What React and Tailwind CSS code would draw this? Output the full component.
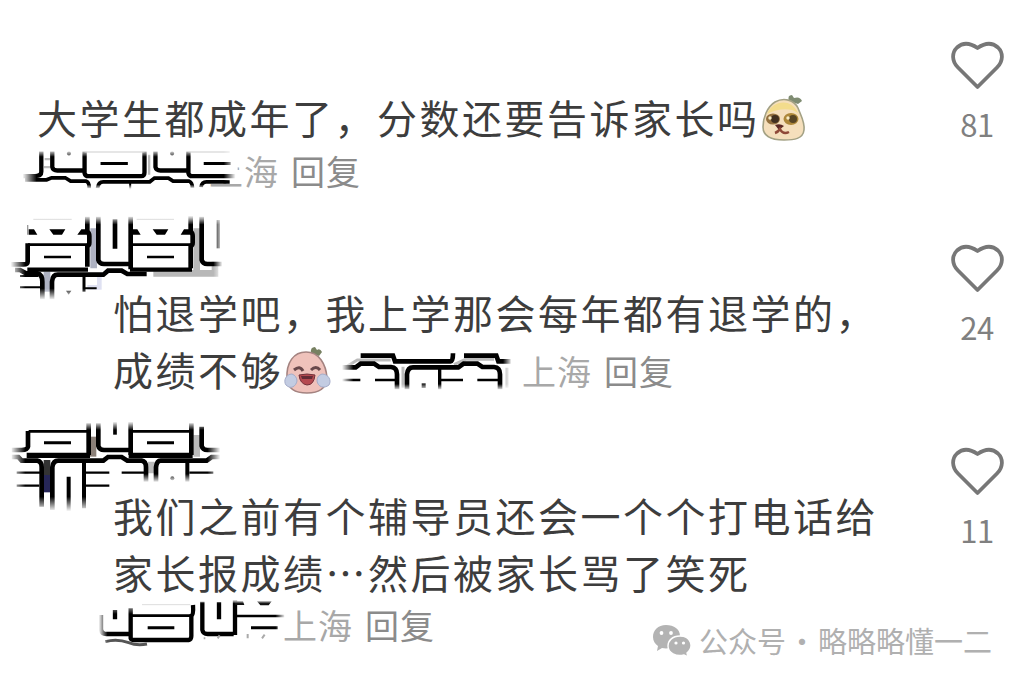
const FONT = "font-['Noto_Sans_CJK_SC','Noto_Sans',sans-serif]";

function Defs() {
    return (
        <svg width="0" height="0" className="absolute">
            <defs>
                <linearGradient id="fadeLeft">
                    <stop offset="0.15" stopColor="#fff" />
                    <stop offset="1" stopColor="#fff" stopOpacity="0" />
                </linearGradient>
                <linearGradient id="fadeRight">
                    <stop offset="0" stopColor="#fff" stopOpacity="0" />
                    <stop offset="0.85" stopColor="#fff" />
                </linearGradient>
                <linearGradient id="fadeTop" x2="0" y2="1">
                    <stop offset="0.15" stopColor="#fff" />
                    <stop offset="1" stopColor="#fff" stopOpacity="0" />
                </linearGradient>
                <linearGradient id="fadeBottom" x2="0" y2="1">
                    <stop offset="0" stopColor="#fff" stopOpacity="0" />
                    <stop offset="0.85" stopColor="#fff" />
                </linearGradient>
            </defs>
        </svg>
    );
}

function Heart() {
    return (
        <svg viewBox="0 0 54 50" className="h-[50px] w-[54px]" fill="none" stroke="#777" strokeWidth="3.8" strokeLinejoin="round">
            <path d="M27.500 47 L8 27.500 C1.500 21 1.800 12.500 7 7.500 C12.500 2.500 20 2.800 27.500 8 C35 2.800 42.500 2.500 48 7.500 C53.200 12.500 53.500 21 47 27.500 Z" />
        </svg>
    );
}

function Like({ count }) {
    return (
        <div className="flex w-[94px] shrink-0 flex-col items-center pt-10">
            <Heart />
            <span className="mt-4 text-[31px] leading-9 tracking-[-0.5px] text-[#808080]">{count}</span>
        </div>
    );
}

function Meta({ className = "" }) {
    return (
        <span className={`text-[34px] leading-10 tracking-[1px] whitespace-pre ${className}`}>
            <span className="text-[#a8a8a8]">上海</span>
            <span className="ml-3 text-[#8b8b8b]">回复</span>
        </span>
    );
}

function DogeEmoji() {
    return (
        <svg viewBox="0 0 48 50" className="h-[50px] w-12 shrink-0">
            <path d="M29 8 Q27 2 32 2 L34 5 Q40 3 42 8 L38 11 Z" fill="#7f8c72" />
            <path d="M3 34 C3 25 7 14 15 9 C24 4 34 7 38 15 C41 23 45 29 44 37 C43 46 34 47 24 47 C11 47 3 43 3 34 Z" fill="#f5dfbc" stroke="#a3a184" strokeWidth="1.6" />
            <path d="M7 21 C12 8 31 4 38 20 C30 14 17 16 7 21 Z" fill="#f3dc8c" />
            <ellipse cx="13" cy="26" rx="7" ry="5.500" fill="#94713f" />
            <ellipse cx="31" cy="26" rx="7.500" ry="6" fill="#ad8739" />
            <circle cx="15" cy="26" r="4" fill="#41301f" />
            <circle cx="33" cy="26" r="4" fill="#584525" />
            <circle cx="10" cy="25" r="1.700" fill="#f8ecc5" />
            <circle cx="28" cy="25" r="1.700" fill="#f8ecc5" />
            <path d="M15 32 Q20 30 24 33 L19 37 Z" fill="#5b2923" />
            <path d="M15 40 Q18 39 20 36 Q23 42 29 39" fill="none" stroke="#8f4938" strokeWidth="2.500" />
        </svg>
    );
}

function CryEmoji() {
    return (
        <svg viewBox="0 0 48 50" className="h-[50px] w-12 shrink-0">
            <path d="M28 8 Q27 2 32 2 L34 5 Q37 3 39 7 L36 11 Z" fill="#778061" />
            <path d="M4 34 C3 17 11 7 23 7 C36 7 43 19 44 33 C43 45 35 48 24 48 C13 48 5 45 4 34 Z" fill="#efc2bb" stroke="#a48380" strokeWidth="1.600" />
            <path d="M11 25 Q17 20 20 26 M28 25 Q33 20 37 25" fill="none" stroke="#68474a" strokeWidth="3" />
            <path d="M16 30 Q24 28 32 30 Q31 40 24 40 Q17 39 16 30 Z" fill="#b64a50" stroke="#73313a" />
            <path d="M18 31 H30 L29 34 H19 Z" fill="#642b35" />
            <path d="M9 29 C3 29 0 36 3 40 C8 45 13 41 14 36 C14 33 12 30 9 29 Z" fill="#c3cce2" stroke="#a4acc9" />
            <path d="M39 29 C45 29 49 35 46 40 C41 44 35 42 34 36 C34 32 36 30 39 29 Z" fill="#c3cce2" stroke="#a4acc9" />
        </svg>
    );
}

// Scribbles that hide the nickname / date of each comment
function ScribbleA() {
    return (
        <svg viewBox="60 205 670 125" className="relative mr-[-34px] h-[42px] w-[223px] shrink-0" fill="none" stroke="#000" strokeWidth="13">
            <rect x="60" y="205" width="650" height="97" fill="#fff" stroke="none" />
            <path d="M134 238 H150 M132 262 H150 M448 225 V285" stroke="#bbb" strokeWidth="7" />
            <path d="M124 215 V276 Q124 289 105 289 H65 M157 215 V262 Q159 272 172 272 H254" />
            <path d="M254 215 V280 Q256 289 266 289 H424 Q434 289 434 278 V215" />
            <path d="M467 215 V262 Q469 272 482 272 H562 M566 215 V280 Q568 289 578 289 H710" />
            <path d="M254 216 H434 M566 216 H690" stroke="#888" strokeWidth="4" />
            <path d="M302 251 H384 M612 251 H693" strokeWidth="9" />
            <path d="M75 300 H140 L155 294 H196 L212 304 H258 Q268 306 268 325 M293 325 Q295 306 310 306 H450 L464 295 H506 L520 304 H568 Q578 308 578 324 M604 322 Q606 306 620 306 H690" strokeWidth="11" />
            <path d="M391 306 V328" strokeWidth="6" />
            <circle cx="207" cy="221" r="6" fill="#333" stroke="none" />
            <circle cx="517" cy="221" r="6" fill="#333" stroke="none" />
            <rect x="60" y="205" width="50" height="125" fill="url(#fadeLeft)" stroke="none" />
            <rect x="672" y="205" width="42" height="97" fill="url(#fadeRight)" stroke="none" />
            <rect x="60" y="205" width="650" height="26" fill="url(#fadeTop)" stroke="none" />
            <rect x="60" y="314" width="560" height="16" fill="url(#fadeBottom)" stroke="none" />
        </svg>
    );
}

function ScribbleB() {
    return (
        <svg viewBox="24 42 648 264" className="h-[88px] w-[216px] shrink-0" fill="none" stroke="#000" strokeWidth="14">
            <path d="M281 85 V205 M141 215 V275" stroke="#aeb2c2" strokeWidth="20" />
            <path d="M590 85 V215 M460 220 H655 M645 145 V220" stroke="#b8b8b8" strokeWidth="20" />
            <path d="M605 60 H660 V185 H620 Z" fill="#fff" stroke="none" />
            <path d="M262 262 H298 V230" stroke="#dfe1f2" strokeWidth="14" />
            <path d="M83 130 V185 Q83 193 70 193 H30 M262 50 V94 Q268 98 268 108 V128 Q268 136 262 138 V200" />
            <path d="M83 75 V104" stroke="#999" strokeWidth="4" />
            <path d="M295 50 V180 Q298 192 312 192 H388 M392 50 V208 M572 45 V94 Q578 98 578 108 V128 Q578 136 572 138 V205" />
            <path d="M605 50 V180 Q608 192 622 192 H670 M345 58 V146" />
            <path d="M655 60 V145" strokeWidth="10" />
            <path d="M84 134 H264 M394 134 H574" strokeWidth="8" />
            <path d="M132 171 H213 M441 171 H522" strokeWidth="8" />
            <path d="M82 209 H264 M390 209 H576" strokeWidth="13" />
            <path d="M100 58 H215 M410 58 H522" stroke="#bbb" strokeWidth="4" />
            <path d="M86 88 H102 L112 104 H86 Z M148 88 H196 L186 104 H160 Z M244 88 H262 V104 H232 Z M394 88 H412 L422 104 H394 Z M458 88 H505 L495 104 H470 Z M552 88 H574 V104 H542 Z" fill="#000" stroke="none" />
            <path d="M45 210 H60 L78 220 H112 Q127 224 127 245 V298 M156 298 V245 Q158 224 173 224 H310 L324 212 H365 L382 222 H440" />
            <path d="M252 225 V275" strokeWidth="9" />
            <path d="M60 228 H115 M60 262 H122 M252 265 H290" strokeWidth="6" />
            <path d="M198 272 H214 L206 284 Z" fill="#333" stroke="none" />
            <rect x="24" y="42" width="52" height="264" fill="url(#fadeLeft)" stroke="none" />
            <rect x="640" y="42" width="32" height="264" fill="url(#fadeRight)" stroke="none" />
            <rect x="24" y="42" width="648" height="32" fill="url(#fadeTop)" stroke="none" />
            <rect x="24" y="265" width="320" height="41" fill="url(#fadeBottom)" stroke="none" />
        </svg>
    );
}

function ScribbleC() {
    return (
        <svg viewBox="213 32 519 129" className="h-[43px] w-[173px] shrink-0" fill="none" stroke="#000" strokeWidth="14">
            <path d="M235 80 L265 62 H365 M555 76 L590 60 H675 M402 82 V145 M714 85 V145" stroke="#bbb" strokeWidth="9" />
            <path d="M275 49 H372 L378 66 H545 Q552 66 552 42 M585 49 H682 L688 66 H725" />
            <path d="M215 84 H260 L275 73 H315 L330 83 H366 Q384 84 384 105 V150 M414 150 V105 Q416 84 432 84 H568 L584 73 H625 L640 83 H675 Q693 84 693 105 V150" />
            <path d="M512 80 V150" strokeWidth="10" />
            <path d="M215 122 H274 M318 122 H382 M515 122 H582 M625 122 H690" strokeWidth="7" />
            <rect x="458" y="132" width="12" height="14" fill="#222" stroke="none" />
            <rect x="213" y="32" width="40" height="129" fill="url(#fadeLeft)" stroke="none" />
            <rect x="702" y="32" width="32" height="129" fill="url(#fadeRight)" stroke="none" />
            <rect x="213" y="134" width="519" height="22" fill="url(#fadeBottom)" stroke="none" />
        </svg>
    );
}

function ScribbleD() {
    return (
        <svg viewBox="24 30 648 282" className="h-[94px] w-[216px] shrink-0" fill="none" stroke="#000" strokeWidth="14">
            <path d="M279 80 V140" stroke="#8b8078" strokeWidth="20" />
            <path d="M590 75 V140 M454 155 V190" stroke="#bbb" strokeWidth="20" />
            <path d="M141 150 V195" stroke="#333" strokeWidth="20" />
            <path d="M141 195 V247" stroke="#262657" strokeWidth="20" />
            <path d="M84 63 V110 Q82 120 65 120 H35 M266 40 V135 M295 40 V108 Q298 120 312 120 H388 M392 35 V135 M574 40 V135 M605 50 V108 Q608 120 622 120 H665" />
            <path d="M345 35 V74" strokeWidth="11" />
            <path d="M86 64 H264 M394 64 H574" strokeWidth="8" />
            <path d="M132 98 H213 M441 98 H522" strokeWidth="9" />
            <path d="M80 136 H270 M386 136 H578" strokeWidth="16" />
            <path d="M35 141 H55 L65 152 H112 Q125 154 125 172 V290 M157 300 V172 Q159 152 175 152 H310 L324 141 H365 L382 152 H425 Q438 154 438 172 V215 M468 215 V172 Q470 152 482 152 H620 L635 141 H660" />
            <path d="M252 150 V295 M562 152 V215 M206 200 V305" strokeWidth="12" />
            <path d="M50 188 H122 M50 227 H118 M256 188 H328 M256 227 H328 M365 188 H433 M568 188 H640" strokeWidth="7" />
            <circle cx="517" cy="205" r="6" fill="#222" stroke="none" />
            <rect x="24" y="30" width="52" height="282" fill="url(#fadeLeft)" stroke="none" />
            <rect x="622" y="30" width="46" height="282" fill="url(#fadeRight)" stroke="none" />
            <rect x="24" y="30" width="648" height="30" fill="url(#fadeTop)" stroke="none" />
            <rect x="24" y="260" width="320" height="52" fill="url(#fadeBottom)" stroke="none" />
            <rect x="420" y="192" width="240" height="30" fill="url(#fadeBottom)" stroke="none" />
        </svg>
    );
}

function ScribbleE() {
    return (
        <svg viewBox="50 27 570 144" className="h-12 w-[190px] shrink-0" fill="none" stroke="#000" strokeWidth="13">
            <path d="M62 75 V118 Q64 132 78 132 H148 M151 55 V145 Q152 150 162 150 H325 Q333 149 333 138 V78 Q340 74 338 45" />
            <path d="M366 35 V120 Q368 132 382 132 H460 M464 30 V135 M416 36 V88 M104 60 V88" />
            <path d="M154 77 H334 M464 78 H612" strokeWidth="8" />
            <path d="M202 113 H282 M512 113 H592" strokeWidth="9" />
            <path d="M185 44 H330" stroke="#ddd" strokeWidth="3" />
            <path d="M464 34 H488 L492 45 H464 Z M530 34 H574 L565 46 H540 Z" fill="#111" stroke="none" />
            <path d="M75 155 Q110 145 145 158 Q170 168 200 162" strokeWidth="9" stroke="#555" />
            <path d="M370 145 H375 M412 145 L418 136 M502 132 V145 M545 145 L553 134" stroke="#aaa" strokeWidth="6" />
            <rect x="50" y="27" width="32" height="144" fill="url(#fadeLeft)" stroke="none" />
            <rect x="585" y="27" width="35" height="144" fill="url(#fadeRight)" stroke="none" />
            <rect x="345" y="27" width="275" height="14" fill="url(#fadeTop)" stroke="none" />
            <rect x="50" y="27" width="120" height="45" fill="url(#fadeTop)" stroke="none" />
        </svg>
    );
}

function WechatIcon() {
    return (
        <svg viewBox="0 0 40 34" className="h-[34px] w-10" fill="#b3b3b3">
            <path d="M14 1 C6 1 1 6 1 13 C1 17 3 20 6 22 L5 27 L10 24 C19 26 28 21 28 12 C28 5 22 1 14 1 Z" />
            <path d="M28 12 C20 12 16 17 16 22 C16 29 24 33 32 31 L36 33 L35 29 C43 22 38 12 28 12 Z" stroke="#fff" strokeWidth="1.400" />
            <g fill="#fff">
                <circle cx="9.500" cy="9" r="1.900" />
                <circle cx="19" cy="9" r="1.900" />
                <circle cx="24" cy="19" r="1.600" />
                <circle cx="31.500" cy="19" r="1.600" />
            </g>
        </svg>
    );
}

export default function App() {
    return (
        <div lang="zh-CN" className={`relative h-[682px] w-[1024px] overflow-hidden bg-white text-[40px] leading-[57px] tracking-[2.5px] whitespace-nowrap text-[#3d3d3d] ${FONT}`}>
            <Defs />

            {/* Comment */}
            <div className="flex h-[203px]">
                <div className="flex-1 pt-[89px]">
                    <div className="flex items-center pl-[37px]">
                        大学生都成年了，分数还要告诉家长吗
                        <DogeEmoji />
                    </div>
                    <div className="flex items-start pt-0.5 pl-5">
                        <ScribbleA />
                        <Meta className="mt-[3px]" />
                    </div>
                </div>
                <Like count={81} />
            </div>

            {/* Replies */}
            <div className="flex h-[203px]">
                <div className="flex-1 pt-[11px]">
                    <div className="-mb-[18px] pl-2">
                        <ScribbleB />
                    </div>
                    <div className="pl-[113px]">
                        <p>怕退学吧，我上学那会每年都有退学的，</p>
                        <div className="flex items-center">
                            成绩不够
                            <CryEmoji />
                            <div className="mt-1 ml-[9px]">
                                <ScribbleC />
                            </div>
                            <Meta className="mt-[3px] ml-[9px]" />
                        </div>
                    </div>
                </div>
                <Like count={24} />
            </div>

            <div className="flex h-[276px]">
                <div className="flex-1 pt-[14px]">
                    <div className="-mb-[27px] pl-2">
                        <ScribbleD />
                    </div>
                    <div className="pl-[113px]">
                        <p>我们之前有个辅导员还会一个个打电话给</p>
                        <p>家长报成绩…然后被家长骂了笑死</p>
                    </div>
                    <div className="-mt-0.5 flex items-start pl-[97px]">
                        <ScribbleE />
                        <Meta className="mt-[6px] -ml-1" />
                    </div>
                </div>
                <Like count={11} />
            </div>

            {/* Watermark */}
            <div className="absolute right-[32px] bottom-[22px] flex items-center text-[29px] leading-10 tracking-[0px] text-[#b0b0b0]">
                <WechatIcon />
                <span className="-mt-0.5 ml-[7px]">公众号</span>
                <span className="-mt-0.5 w-8 text-center">·</span>
                <span className="-mt-0.5">略略略懂一二</span>
            </div>
        </div>
    );
}
